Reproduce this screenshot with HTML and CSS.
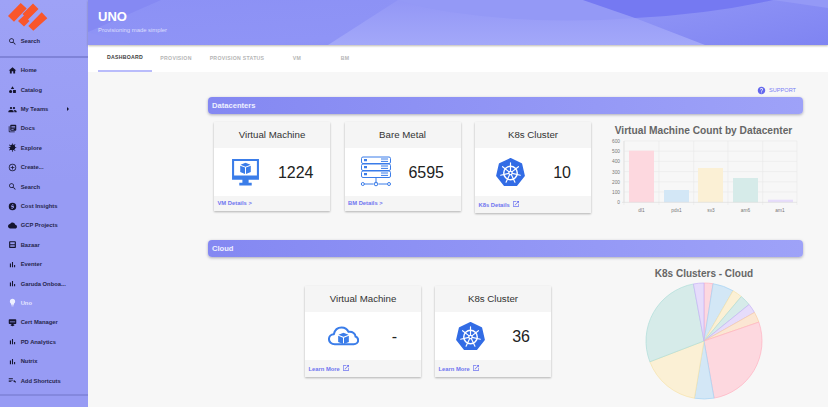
FILE: index.html
```html
<html>
<head>
  <title>UNO</title>
  <link rel="stylesheet" href="styles.css">
</head>
<body>
  <svg class="defs">
    <symbol id="i-search" viewBox="0 0 24 24"><path d="M15.5 14h-.79l-.28-.27C15.41 12.59 16 11.11 16 9.5 16 5.91 13.09 3 9.5 3S3 5.91 3 9.5 5.91 16 9.5 16c1.61 0 3.09-.59 4.23-1.57l.27.28v.79l5 4.99L20.49 19l-4.99-5zm-6 0C7.01 14 5 11.99 5 9.5S7.01 5 9.5 5 14 7.01 14 9.5 11.99 14 9.5 14z"/></symbol>
    <symbol id="i-home" viewBox="0 0 24 24"><path d="M10 20v-6h4v6h5v-8h3L12 3 2 12h3v8z"/></symbol>
    <symbol id="i-catalog" viewBox="0 0 24 24"><path d="M12 3l4.5 7.5h-9zM7 13a4.2 4.2 0 1 1 0 8.4A4.2 4.2 0 0 1 7 13zM13.5 13.500h7.500v7.500h-7.500z"/></symbol>
    <symbol id="i-people" viewBox="0 0 24 24"><path d="M16 11c1.660 0 2.990-1.340 2.990-3S17.660 5 16 5c-1.660 0-3 1.340-3 3s1.340 3 3 3zm-8 0c1.660 0 2.990-1.340 2.990-3S9.660 5 8 5C6.340 5 5 6.340 5 8s1.340 3 3 3zm0 2c-2.330 0-7 1.170-7 3.500V19h14v-2.500c0-2.330-4.670-3.500-7-3.500zm8 0c-.29 0-.62.02-.97.05 1.160.84 1.970 1.970 1.970 3.450V19h6v-2.500c0-2.330-4.670-3.500-7-3.500z"/></symbol>
    <symbol id="i-docs" viewBox="0 0 24 24"><path d="M4 6H2v14c0 1.100.9 2 2 2h14v-2H4V6zm16-4H8c-1.100 0-2 .9-2 2v12c0 1.100.9 2 2 2h12c1.100 0 2-.9 2-2V4c0-1.100-.9-2-2-2zm-1 9H9V9h10v2zm-4 4H9v-2h6v2zm4-8H9V5h10v2z"/></symbol>
    <symbol id="i-explore" viewBox="0 0 24 24"><path d="M12 4a7 7 0 0 1 7 7 7 7 0 0 1-7 8 7 7 0 0 1-7-8 7 7 0 0 1 7-7zM2 11h20v2H2zM11 1h2v22h-2zM4 4l16 16-1.400 1.400L2.600 5.400zM20 4L4 20l-1.400-1.400L18.600 2.600z"/></symbol>
    <symbol id="i-create" viewBox="0 0 24 24"><path d="M13 7h-2v4H7v2h4v4h2v-4h4v-2h-4V7zm-1-5C6.480 2 2 6.480 2 12s4.480 10 10 10 10-4.480 10-10S17.520 2 12 2zm0 18c-4.410 0-8-3.590-8-8s3.590-8 8-8 8 3.590 8 8-3.590 8-8 8z"/></symbol>
    <symbol id="i-cost" viewBox="0 0 24 24"><path fill-rule="evenodd" d="M12 2a10 10 0 1 1 0 20 10 10 0 0 1 0-20zm-1 4v1.800c-1.700.4-2.800 1.500-2.800 3 0 1.800 1.500 2.500 3.300 3 1.500.4 2 .8 2 1.400 0 .6-.6 1.100-1.600 1.100-1.100 0-1.700-.5-1.800-1.300H8.100c.1 1.700 1.300 2.700 2.900 3V18h2v-1.900c1.700-.3 2.900-1.400 2.900-3 0-2-1.600-2.700-3.400-3.100-1.500-.4-1.900-.8-1.900-1.300 0-.6.600-1 1.400-1 .9 0 1.400.4 1.500 1.100h2c-.1-1.500-1.100-2.500-2.500-2.900V6z"/></symbol>
    <symbol id="i-cloud" viewBox="0 0 24 24"><path d="M19.350 10.040C18.670 6.590 15.640 4 12 4 9.110 4 6.600 5.640 5.350 8.040 2.340 8.360 0 10.910 0 14c0 3.310 2.690 6 6 6h13c2.760 0 5-2.240 5-5 0-2.640-2.050-4.780-4.650-4.960z"/></symbol>
    <symbol id="i-bazaar" viewBox="0 0 24 24"><path fill-rule="evenodd" d="M5 3h14a2 2 0 0 1 2 2v14a2 2 0 0 1-2 2H5a2 2 0 0 1-2-2V5a2 2 0 0 1 2-2zm1 3v5h12V6zm0 8v4h12v-4z"/></symbol>
    <symbol id="i-bars" viewBox="0 0 24 24"><path d="M5 9.200h3V19H5zM10.600 5h2.800v14h-2.800zm5.600 8H19v6h-2.800z"/></symbol>
    <symbol id="i-bulb" viewBox="0 0 24 24"><path d="M9 21c0 .55.45 1 1 1h4c.55 0 1-.45 1-1v-1H9v1zm3-19C8.140 2 5 5.140 5 9c0 2.380 1.190 4.470 3 5.740V17c0 .55.45 1 1 1h6c.55 0 1-.45 1-1v-2.260c1.810-1.270 3-3.360 3-5.740 0-3.860-3.140-7-7-7z"/></symbol>
    <symbol id="i-cert" viewBox="0 0 24 24"><path d="M4 3h16a2 2 0 0 1 2 2v9a2 2 0 0 1-2 2h-5v2h2v2l-5 2-5-2v-2h2v-2H4a2 2 0 0 1-2-2V5a2 2 0 0 1 2-2zm1 6v2h14V9z"/></symbol>
    <symbol id="i-add" viewBox="0 0 24 24"><path d="M2 6h11v2H2zM2 10h11v2H2zM2 14h7v2H2zM15 11h3v3h3v3h-3v-1h-3z"/></symbol>
    <symbol id="i-open" viewBox="0 0 24 24"><path d="M19 19H5V5h7V3H5c-1.110 0-2 .9-2 2v14c0 1.100.89 2 2 2h14c1.100 0 2-.9 2-2v-7h-2v7zM14 3v2h3.590l-9.830 9.830 1.410 1.410L19 6.410V10h2V3h-7z"/></symbol>
    <symbol id="i-help" viewBox="0 0 24 24"><path d="M12 2C6.480 2 2 6.480 2 12s4.480 10 10 10 10-4.480 10-10S17.520 2 12 2zm1 17h-2v-2h2v2zm2.070-7.750l-.9.92C13.450 12.900 13 13.500 13 15h-2v-.5c0-1.100.45-2.100 1.170-2.830l1.240-1.260c.37-.36.59-.86.59-1.410 0-1.100-.9-2-2-2s-2 .9-2 2H8c0-2.210 1.790-4 4-4s4 1.790 4 4c0 .88-.36 1.680-.93 2.250z"/></symbol>
    <symbol id="i-k8s" viewBox="0 0 30 30">
      <path fill="#326ce5" d="M15 .8l11.300 5.400 2.800 12.200-7.800 9.800H8.700L.9 18.400 3.700 6.200z" stroke="#326ce5" stroke-width="1.500" stroke-linejoin="round"/>
      <g fill="none" stroke="#fff">
        <circle cx="15" cy="15.500" r="7" stroke-width="1.500"/>
        <circle cx="15" cy="15.500" r="1.800" stroke-width="1.200"/>
        <path stroke-width="1.200" stroke-linecap="round" d="M15 13.700V5M16.400 14.400L23.200 9M16.800 15.900L25.200 17.800M15.800 17.100L19.600 25M14.200 17.100L10.400 25M13.200 15.900L4.800 17.800M13.600 14.400L6.800 9"/>
      </g>
    </symbol>
    <symbol id="i-cube" viewBox="0 0 20 20">
      <path d="M10 1l8 3.200-8 3.200-8-3.200zM1.500 5.700l7.700 3.100V19l-7.700-3.200zM18.500 5.700l-7.700 3.100V19l7.700-3.200z"/>
    </symbol>
  </svg>

  <div class="app">
    <aside class="sidebar">
      <svg class="logo" width="88" height="34" viewBox="0 0 88 34">
        <path d="M8 16L20.700 3l6 5.500L14 21.700zM28.300 26L41.700 12.300l5.600 6L33.300 30.700zM33 3.500l5.500 5.500-10.500 10.500 1.500 1.500-5.500 5.500-6-5.500 6-5.500-1.500-1.500z"/>
      </svg>
      <a class="nav-item search-top"><svg class="nav-icon"><use href="#i-search"/></svg>Search</a>
      <nav class="nav">
        <a class="nav-item"><svg class="nav-icon"><use href="#i-home"/></svg>Home</a>
        <a class="nav-item"><svg class="nav-icon"><use href="#i-catalog"/></svg>Catalog</a>
        <a class="nav-item"><svg class="nav-icon"><use href="#i-people"/></svg>My Teams<span class="caret"></span></a>
        <a class="nav-item"><svg class="nav-icon"><use href="#i-docs"/></svg>Docs</a>
        <a class="nav-item"><svg class="nav-icon"><use href="#i-explore"/></svg>Explore</a>
        <a class="nav-item"><svg class="nav-icon"><use href="#i-create"/></svg>Create...</a>
        <a class="nav-item"><svg class="nav-icon"><use href="#i-search"/></svg>Search</a>
        <a class="nav-item"><svg class="nav-icon"><use href="#i-cost"/></svg>Cost Insights</a>
        <a class="nav-item"><svg class="nav-icon"><use href="#i-cloud"/></svg>GCP Projects</a>
        <a class="nav-item"><svg class="nav-icon"><use href="#i-bazaar"/></svg>Bazaar</a>
        <a class="nav-item"><svg class="nav-icon"><use href="#i-bars"/></svg>Eventer</a>
        <a class="nav-item"><svg class="nav-icon"><use href="#i-bars"/></svg>Garuda Onboa...</a>
        <a class="nav-item active"><svg class="nav-icon"><use href="#i-bulb"/></svg>Uno</a>
        <a class="nav-item"><svg class="nav-icon"><use href="#i-cert"/></svg>Cert Manager</a>
        <a class="nav-item"><svg class="nav-icon"><use href="#i-bars"/></svg>PD Analytics</a>
        <a class="nav-item"><svg class="nav-icon"><use href="#i-bars"/></svg>Nutrix</a>
        <a class="nav-item"><svg class="nav-icon"><use href="#i-add"/></svg>Add Shortcuts</a>
      </nav>
    </aside>

    <main class="main">
      <header class="header">
        <svg class="header-art" width="740" height="45" viewBox="88 0 740 45" preserveAspectRatio="none">
          <defs>
            <linearGradient id="hdr-light" x1="0" y1="0" x2="0" y2="1">
              <stop offset="0" stop-color="#9397f6"/>
              <stop offset="1" stop-color="#a3a8f9"/>
            </linearGradient>
            <linearGradient id="hdr-right" x1="0" y1="0" x2="1" y2="1">
              <stop offset="0" stop-color="#9196f6"/>
              <stop offset="1" stop-color="#7f84f2"/>
            </linearGradient>
            <linearGradient id="hdr-left" x1="0" y1="0" x2="1" y2="1">
              <stop offset="0" stop-color="#8c91f5"/>
              <stop offset="0.6" stop-color="#8f94f6"/>
              <stop offset="1" stop-color="#8085f2"/>
            </linearGradient>
          </defs>
          <rect x="88" y="0" width="740" height="45" fill="url(#hdr-left)"/>
          <path d="M88 0H161L88 32z" fill="#8589f3"/>
          <path d="M88 32L133 45H88z" fill="#9094f5"/>
          <path d="M635 18L705 45H828V0H700z" fill="url(#hdr-right)"/>
          <path d="M328 45L398 0H583L635 18 705 45z" fill="url(#hdr-light)"/>
          <path d="M398 0H583L635 18Q540 25 458 13 420 8 398 0z" fill="#9499f6"/>
          <path d="M583 0L635 18Q710 14 773 0z" fill="#7579f2"/>
          <path d="M773 0H828V8z" fill="#9499f6"/>
        </svg>
        <h1 class="title">UNO</h1>
        <p class="subtitle">Provisioning made simpler</p>
      </header>

      <div class="tabs">
        <a class="tab tab-dash selected">DASHBOARD</a>
        <a class="tab tab-prov">PROVISION</a>
        <a class="tab tab-status">PROVISION STATUS</a>
        <a class="tab tab-vm">VM</a>
        <a class="tab tab-bm">BM</a>
      </div>

      <div class="content">
        <a class="support"><svg class="support-icon"><use href="#i-help"/></svg>SUPPORT</a>

        <section class="section">
          <div class="section-bar">Datacenters</div>
          <div class="row">
            <div class="card">
              <div class="card-head">Virtual Machine</div>
              <div class="card-body">
                <svg class="stat-icon icon-vm" viewBox="0 0 28 28">
                  <path fill="#3b7de9" fill-rule="evenodd" d="M1 1h26v20H1zM3 3v14h22V3zM11 21h6v3h3v2.500H8V24h3z"/>
                  <use href="#i-cube" x="8" y="4" width="12" height="12" fill="#3b7de9"/>
                </svg>
                <span class="stat">1224</span>
              </div>
              <div class="card-foot"><a class="link">VM Details &gt;</a></div>
            </div>
            <div class="card">
              <div class="card-head">Bare Metal</div>
              <div class="card-body">
                <svg class="stat-icon icon-bm" viewBox="0 0 32 32" fill="none" stroke="#3b7de9" stroke-width="1">
                  <rect x="1.500" y="1" width="29" height="6.500" rx="1.500"/>
                  <rect x="1.500" y="8" width="29" height="6.500" rx="1.500"/>
                  <rect x="1.500" y="15" width="29" height="6.500" rx="1.500"/>
                  <path d="M4 4.200h3M4 11.200h3M4 18.200h3" stroke-width="2.200"/>
                  <path d="M21 3h7M21 5.400h7M21 10h7M21 12.400h7M21 17h7M21 19.400h7"/>
                  <path d="M16 21.500v6M4 28h9.500M18.500 28H27"/>
                  <circle cx="2.800" cy="28" r="1.500"/><circle cx="16" cy="28" r="1.800"/><circle cx="29" cy="28" r="1.500"/>
                </svg>
                <span class="stat">6595</span>
              </div>
              <div class="card-foot"><a class="link">BM Details &gt;</a></div>
            </div>
            <div class="card">
              <div class="card-head">K8s Cluster</div>
              <div class="card-body">
                <svg class="stat-icon icon-k8s"><use href="#i-k8s"/></svg>
                <span class="stat stat-narrow">10</span>
              </div>
              <div class="card-foot foot-tall"><a class="link">K8s Details<svg class="open-icon"><use href="#i-open"/></svg></a></div>
            </div>
            <div class="chart">
              <div class="chart-title">Virtual Machine Count by Datacenter</div>
              <svg class="bar-chart" width="204" height="76" viewBox="600 138 204 76">
                <g class="grid">
                  <path d="M624 141H797M624 151.200H797M624 161.400H797M624 171.600H797M624 181.800H797M624 192H797"/>
                  <path d="M624 141V205M659 141V205M693.700 141V205M728 141V205M762.700 141V205M797 141V205"/>
                </g>
                <rect x="629" y="150.700" width="25" height="51.600" fill="#fdd8df"/>
                <rect x="664" y="190" width="25" height="12.300" fill="#d3e7f6"/>
                <rect x="698" y="168" width="25" height="34.300" fill="#fbf0d5"/>
                <rect x="733" y="178" width="25" height="24.300" fill="#d6ebe9"/>
                <rect x="768" y="199.700" width="25" height="2.600" fill="#e6dcfb"/>
                <path class="axis" d="M622 202.300H797M624 141V202.300"/>
                <g class="ticks ticks-y">
                  <text x="620" y="143">600</text>
                  <text x="620" y="153.200">500</text>
                  <text x="620" y="163.400">400</text>
                  <text x="620" y="173.600">300</text>
                  <text x="620" y="183.800">200</text>
                  <text x="620" y="194">100</text>
                  <text x="620" y="204.300">0</text>
                </g>
                <g class="ticks ticks-x">
                  <text x="641.500" y="211.500">dl1</text>
                  <text x="676.500" y="211.500">pdx1</text>
                  <text x="711" y="211.500">sv3</text>
                  <text x="745.500" y="211.500">am6</text>
                  <text x="780" y="211.500">am1</text>
                </g>
              </svg>
            </div>
          </div>
        </section>

        <section class="section section-cloud">
          <div class="section-bar">Cloud</div>
          <div class="row row-cloud">
            <div class="card">
              <div class="card-head">Virtual Machine</div>
              <div class="card-body">
                <svg class="stat-icon icon-cloud" viewBox="0 0 32 20">
                  <path fill="none" stroke="#3b7de9" stroke-width="2.100" d="M7 18.500C3.500 18.500 1 16.200 1 13.200 1 10.300 3.200 8.300 6 8.100 7 4 10 1.200 14 1.200c3.500 0 6 2 7.200 4.500 4.500-.5 7 2 7.200 4.800 1.800.5 2.700 2.300 2.700 3.800 0 2.500-2 4.200-4.600 4.200z"/>
                  <use href="#i-cube" x="9.500" y="6" width="13" height="13" fill="#3b7de9"/>
                </svg>
                <span class="stat stat-dash">-</span>
              </div>
              <div class="card-foot foot-tall"><a class="link">Learn More<svg class="open-icon"><use href="#i-open"/></svg></a></div>
            </div>
            <div class="card">
              <div class="card-head">K8s Cluster</div>
              <div class="card-body">
                <svg class="stat-icon icon-k8s"><use href="#i-k8s"/></svg>
                <span class="stat stat-cloud">36</span>
              </div>
              <div class="card-foot foot-tall"><a class="link">Learn More<svg class="open-icon"><use href="#i-open"/></svg></a></div>
            </div>
            <div class="pie-box">
              <div class="pie-title">K8s Clusters - Cloud</div>
              <svg class="pie" width="118" height="118" viewBox="-59 -59 118 118">
                <path fill="#fdd8df" stroke="#ffb1c1" d="M0 0L0 -58A58 58 0 0 1 9.070 -57.290z"/>
                <path fill="#d3e7f6" stroke="#a5d2f3" d="M0 0L9.070 -57.290A58 58 0 0 1 29 -50.230z"/>
                <path fill="#fbf0d5" stroke="#f6e2ab" d="M0 0L29 -50.230A58 58 0 0 1 37.280 -44.430z"/>
                <path fill="#d6ebe9" stroke="#aedcd9" d="M0 0L37.280 -44.430A58 58 0 0 1 45.070 -36.500z"/>
                <path fill="#e6dcfb" stroke="#c7b2f7" d="M0 0L45.070 -36.500A58 58 0 0 1 50.480 -28.560z"/>
                <path fill="#fbe6d3" stroke="#fbcfa4" d="M0 0L50.480 -28.560A58 58 0 0 1 54.840 -18.880z"/>
                <path fill="#fdd8df" stroke="#ffb1c1" d="M0 0L54.840 -18.880A58 58 0 0 1 10.070 57.120z"/>
                <path fill="#d3e7f6" stroke="#a5d2f3" d="M0 0L10.070 57.120A58 58 0 0 1 -9.570 57.200z"/>
                <path fill="#fbf0d5" stroke="#f6e2ab" d="M0 0L-9.570 57.200A58 58 0 0 1 -54.150 20.790z"/>
                <path fill="#d6ebe9" stroke="#aedcd9" d="M0 0L-54.150 20.790A58 58 0 0 1 -10.570 -57.030z"/>
                <path fill="#e6dcfb" stroke="#c7b2f7" d="M0 0L-10.570 -57.030A58 58 0 0 1 0 -58z"/>
              </svg>
            </div>
          </div>
        </section>
      </div>
    </main>
  </div>
</body>
</html>
```

FILE: styles.css
```css
* {
  box-sizing: border-box;
}

html, body {
  margin: 0;
  height: 100%;
  overflow: hidden;
}

body {
  font-family: "Liberation Sans", Arial, sans-serif;
  background: #f7f7f7;
}

.defs {
  display: none;
}

.app {
  display: flex;
  height: 407px;
}

/* sidebar */
.sidebar {
  width: 88px;
  flex: none;
  background: linear-gradient(180deg, #9ea2f6 0%, #979bf4 45%, #979bf4 100%);
}

.logo {
  display: block;
  fill: #f9562b;
}

.nav-item {
  display: flex;
  align-items: center;
  height: 19.4px;
  padding-left: 8px;
  font-size: 5.8px;
  font-weight: bold;
  color: #26264c;
}

.nav-icon {
  width: 9px;
  height: 9px;
  margin-right: 3.7px;
  flex: none;
  fill: #15152e;
}

.search-top {
  height: 14px;
  margin-bottom: 8px;
}

.nav {
  border-top: 2px solid #7f83d8;
  border-bottom: 2px solid #8488de;
  padding-top: 2.6px;
  height: 340px;
}

.caret {
  margin-left: 19px;
  width: 0;
  height: 0;
  border-left: 2.5px solid #15152e;
  border-top: 2px solid transparent;
  border-bottom: 2px solid transparent;
}

.nav-item.active {
  color: #e4e6ff;
}

.active .nav-icon {
  fill: #eef0ff;
}

/* header + tabs */
.main {
  flex: 1;
  min-width: 0;
  display: flex;
  flex-direction: column;
}

.header {
  position: relative;
  height: 45px;
  padding: 10px 10px 0;
  flex: none;
  box-shadow: 0 1px 2px rgba(90, 80, 60, .4);
  overflow: hidden;
}

.header-art {
  position: absolute;
  top: 0;
  left: 0;
}

.title {
  position: relative;
  margin: 0;
  font-size: 13px;
  line-height: 13px;
  font-weight: bold;
  color: #fff;
}

.subtitle {
  position: relative;
  margin: 1px 0 0;
  font-size: 5.9px;
  line-height: 13px;
  color: #dcdefd;
}

.tabs {
  display: flex;
  flex: none;
  height: 27px;
  padding-left: 10px;
  background: #fff;
}

.tab {
  display: flex;
  align-items: center;
  justify-content: center;
  height: 27px;
  padding-bottom: 1px;
  font-size: 5.2px;
  font-weight: bold;
  letter-spacing: .28px;
  color: #b5b5b5;
}

.tab-dash { width: 54px; }
.tab-prov { width: 48px; }
.tab-status { width: 74px; }
.tab-vm { width: 46px; }
.tab-bm { width: 50px; }

.tab.selected {
  color: #3c3c3c;
  border-bottom: 2px solid #b9bcfb;
}

/* page content */
.content {
  flex: 1;
  padding: 14px 25px 0 120px;
  background: #f7f7f7;
}

.support {
  display: flex;
  align-items: center;
  justify-content: flex-end;
  height: 8px;
  padding-right: 7px;
  font-size: 5.6px;
  color: #7b80f5;
}

.support-icon {
  width: 9px;
  height: 9px;
  margin-right: 3px;
  fill: #6468ee;
}

.section {
  margin-top: 3px;
}

.section-cloud {
  margin-top: 26px;
}

.section-bar {
  height: 17px;
  padding-left: 4px;
  border-radius: 4px;
  background: linear-gradient(90deg, #8488f2 0%, #9ea2f8 100%);
  box-shadow: 0 1px 3px rgba(60, 60, 90, .4);
  font-size: 7.6px;
  line-height: 17px;
  font-weight: bold;
  color: #eef0ff;
}

.row {
  display: flex;
  align-items: flex-start;
  gap: 14.5px;
  padding: 8px 0 0 6px;
}

.row-cloud {
  gap: 14px;
  padding-left: 97px;
}

.row-cloud .card {
  margin-top: 21px;
}

/* stat cards */
.card {
  width: 116px;
  flex: none;
  background: #f5f5f5;
  box-shadow: 0 1px 2px rgba(0, 0, 0, .28);
}

.card-head {
  height: 26px;
  font-size: 9.7px;
  line-height: 25px;
  text-align: center;
  color: #333;
}

.card-body {
  display: flex;
  align-items: center;
  height: 48px;
  background: #fff;
  position: relative;
}

.stat {
  position: absolute;
  right: 16.5px;
  top: 52%;
  transform: translateY(-50%);
  font-size: 16px;
  line-height: 20px;
  color: #222;
}

.stat-narrow {
  right: 20px;
}

.stat-cloud {
  right: 21px;
}

.stat-dash {
  right: 24px;
}

.stat-icon {
  flex: none;
  display: block;
}

.icon-vm {
  width: 29px;
  height: 29px;
  margin-left: 17px;
}

.icon-bm {
  width: 32px;
  height: 32px;
  margin-left: 15px;
}

.icon-k8s {
  width: 29px;
  height: 29px;
  margin-left: 21px;
}

.icon-cloud {
  width: 31px;
  height: 20px;
  margin-left: 23px;
}

.card-foot {
  height: 15px;
  padding-left: 3.5px;
  font-size: 5.8px;
  line-height: 15px;
  font-weight: bold;
}

.foot-tall {
  height: 17px;
  line-height: 19px;
}

.link {
  display: inline-flex;
  align-items: center;
  color: #6f74f0;
}

.open-icon {
  width: 8px;
  height: 8px;
  margin-left: 2px;
  margin-top: -4px;
  fill: #6f74f0;
}

/* charts */
.chart {
  margin-left: -6px;
  width: 212px;
}

.chart-title {
  margin-left: 4px;
  padding-top: 1.5px;
  font-size: 10.2px;
  line-height: 13px;
  font-weight: bold;
  text-align: center;
  color: #666;
  white-space: nowrap;
}

.bar-chart {
  display: block;
  margin-top: 1.5px;
}

.grid path {
  fill: none;
  stroke: #e9e9e9;
  stroke-width: .6;
}

.axis {
  fill: none;
  stroke: #d8d8d8;
  stroke-width: .6;
}

.ticks text {
  font-size: 4.8px;
  fill: #777;
}

.ticks-y text {
  text-anchor: end;
}

.ticks-x text {
  text-anchor: middle;
}

.pie-box {
  width: 160px;
  margin-top: 3px;
  margin-left: 59px;
  display: flex;
  flex-direction: column;
  align-items: center;
}

.pie-title {
  font-size: 10px;
  line-height: 12px;
  font-weight: bold;
  color: #666;
}

.pie {
  display: block;
  margin-top: 1.5px;
}

.pie path {
  stroke-width: .7;
}
```
